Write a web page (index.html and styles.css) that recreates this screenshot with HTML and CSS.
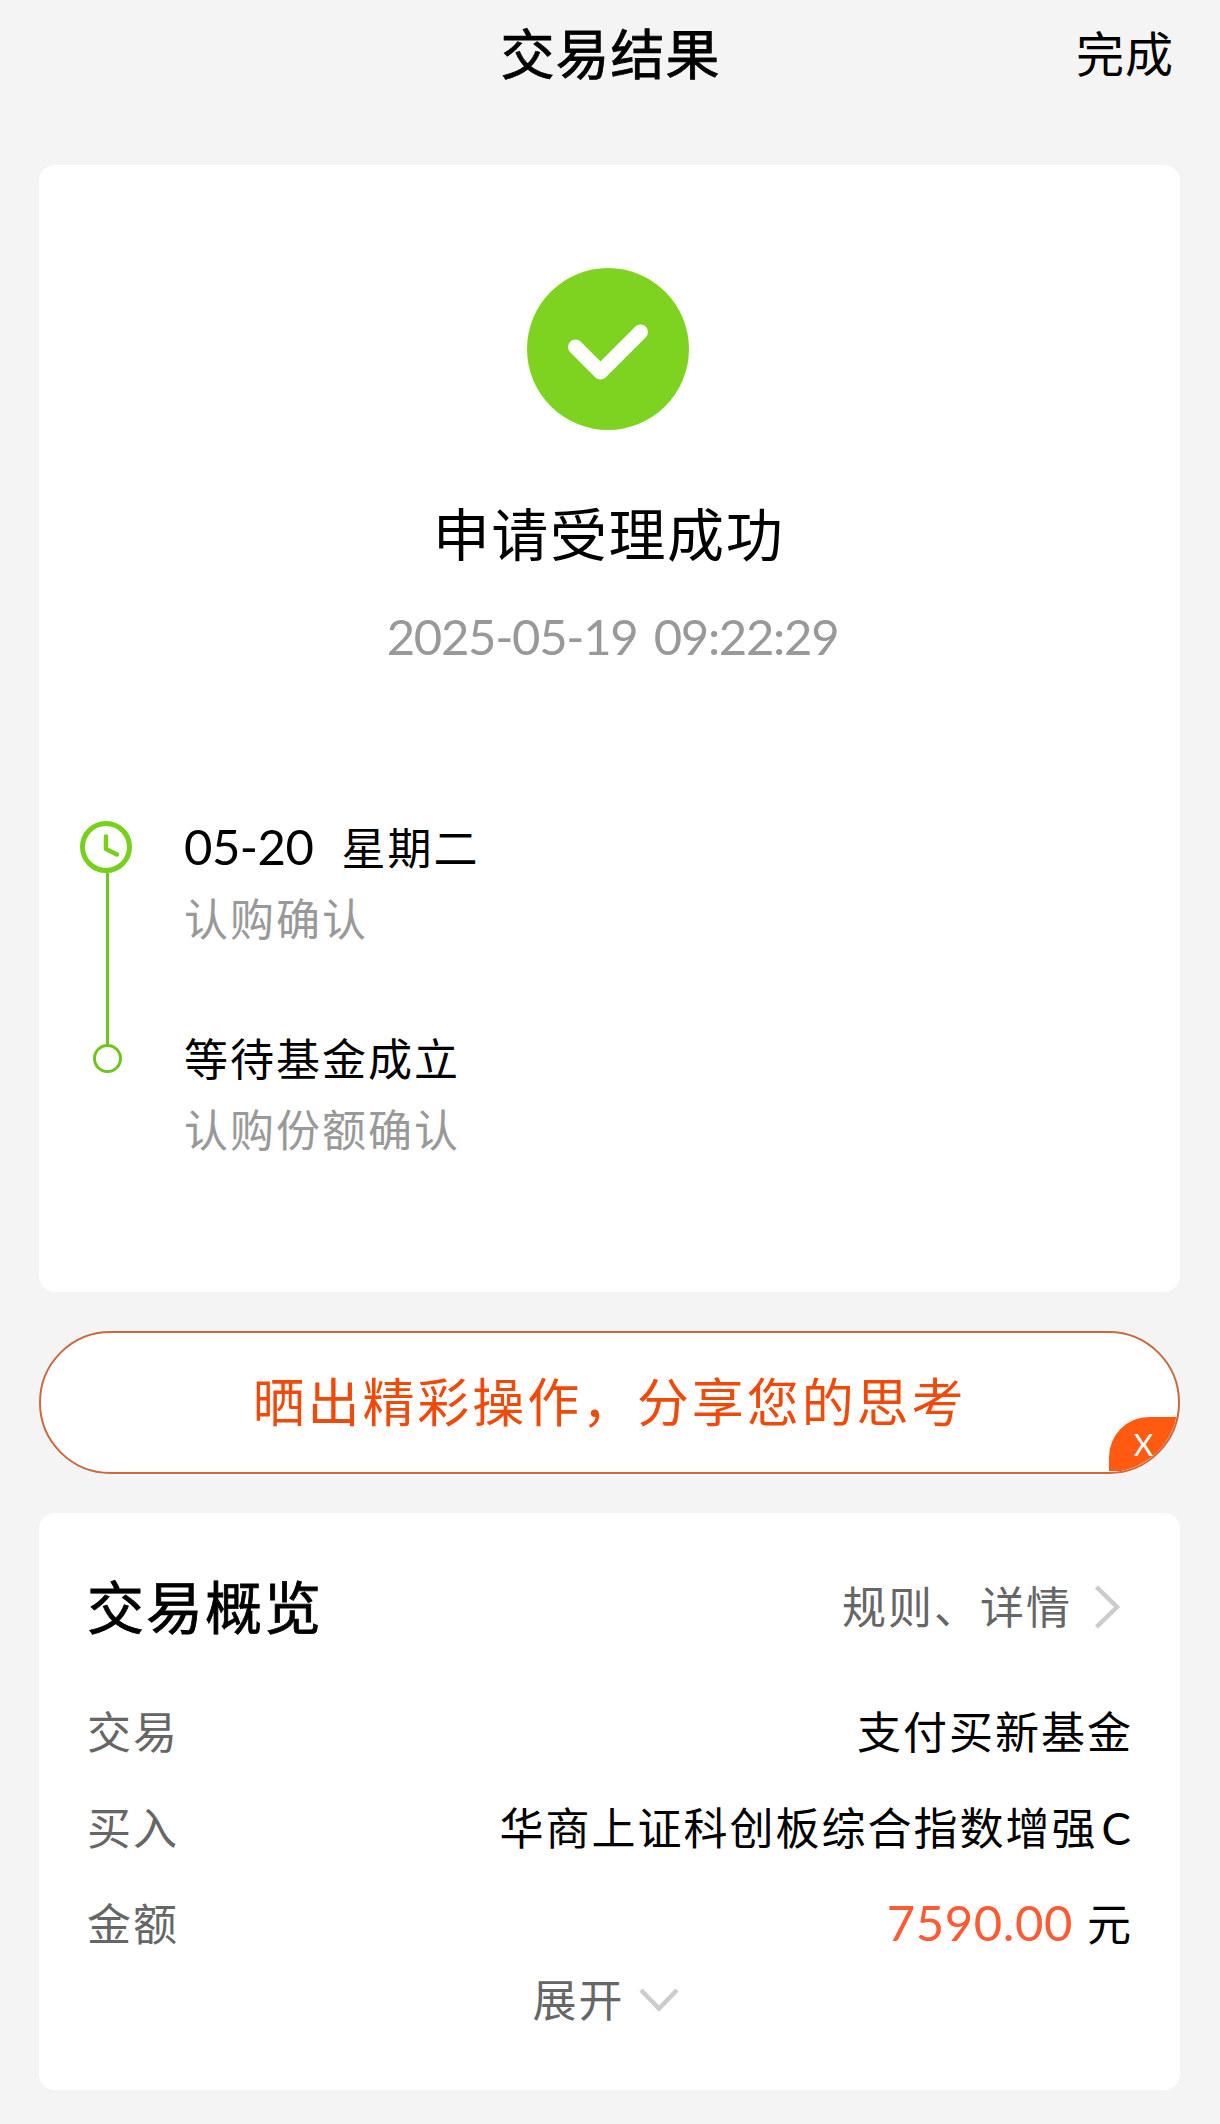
FILE: index.html
```
<!DOCTYPE html>
<html lang="zh-CN">
<head>
  <meta charset="UTF-8">
  <title>交易结果</title>
  <link rel="stylesheet" href="styles.css">
</head>
<body>
  <header>
    <h1>交易结果</h1>
    <a class="done">完成</a>
  </header>

  <section class="card result">
    <svg class="success" viewBox="0 0 162 162">
      <circle cx="81" cy="81" r="81" fill="#7ed321"/>
      <path d="M48.500 79 L73.500 104 L113.500 64" fill="none" stroke="#fff" stroke-width="15" stroke-linecap="round" stroke-linejoin="round"/>
    </svg>
    <h2>申请受理成功</h2>
    <p class="time">2025-05-19 09:22:29</p>

    <div class="timeline">
      <div class="track">
        <svg class="clock" viewBox="0 0 52 52">
          <circle cx="26" cy="26" r="23.500" fill="none" stroke="#76d01c" stroke-width="5"/>
          <path d="M26 15.500 V28 L37 33.500" fill="none" stroke="#76d01c" stroke-width="4.500" stroke-linecap="round" stroke-linejoin="round"/>
        </svg>
        <div class="line"></div>
        <div class="dot"></div>
      </div>
      <div class="steps">
        <div class="step">
          <p class="step-title"><span class="date">05-20</span>星期二</p>
          <p class="step-desc">认购确认</p>
        </div>
        <div class="step">
          <p class="step-title">等待基金成立</p>
          <p class="step-desc">认购份额确认</p>
        </div>
      </div>
    </div>
  </section>

  <div class="share">
    <span>晒出精彩操作，分享您的思考</span>
    <div class="close">X</div>
  </div>

  <section class="card overview">
    <div class="overview-head">
      <h3>交易概览</h3>
      <a class="rules">规则、详情
        <svg class="arrow-right" viewBox="0 0 26 44"><path d="M2.500 2 L23 22 L2.500 42" fill="none" stroke="#ccc" stroke-width="4.500"/></svg>
      </a>
    </div>
    <div class="row"><span class="label">交易</span><span class="value">支付买新基金</span></div>
    <div class="row"><span class="label">买入</span><span class="value">华商上证科创板综合指数增强<span class="share-class">C</span></span></div>
    <div class="row"><span class="label">金额</span><span class="value"><span class="amount">7590.00</span>元</span></div>
    <div class="expand">展开
      <svg class="arrow-down" viewBox="0 0 40 24"><path d="M2 2 L20 20.500 L38 2" fill="none" stroke="#ccc" stroke-width="4.500"/></svg>
    </div>
  </section>
</body>
</html>
```
FILE: styles.css
```
* {
  box-sizing: border-box;
}
body, h1, h2, h3, p {
  margin: 0;
  font-weight: 400;
}
body {
  background: #f4f4f4;
  color: #000;
  font-family: Lato, 'Noto Sans CJK SC', sans-serif;
  font-size: 44px;
  line-height: 54px;
  letter-spacing: 2px;
  padding: 0 40px 0 39px;
}
header {
  display: grid;
  grid-template-columns: 1fr auto 1fr;
  align-items: center;
  height: 107px;
  margin-bottom: 58px;
}
h1 {
  grid-column: 2;
  font-size: 54px;
  letter-spacing: 1px;
  padding: 2px 0 0 2px;
  -webkit-text-stroke: 0.8px #000;
}
.done {
  justify-self: end;
  font-size: 48px;
  letter-spacing: 1px;
  margin-right: 6px;
}
.card {
  background: #fff;
  border-radius: 16px;
}
.result {
  height: 1127px;
  padding-top: 103px;
  text-align: center;
}
.success {
  display: block;
  width: 162px;
  height: 162px;
  margin: 0 auto 74px 488px;
}
h2 {
  font-size: 57px;
  line-height: 60px;
  letter-spacing: 1.6px;
  padding-right: 2px;
}
.time {
  margin-top: 42px;
  padding-left: 6px;
  font-size: 49px;
  line-height: 60px;
  letter-spacing: -1.3px;
  word-spacing: 5px;
  color: #999;
}
.timeline {
  display: flex;
  margin-top: 155px;
  padding-left: 41px;
  text-align: left;
}
.track {
  display: flex;
  flex-direction: column;
  align-items: center;
  width: 54px;
}
.clock {
  width: 52px;
  height: 52px;
  margin-right: 2px;
}
.line {
  width: 3px;
  height: 171px;
  background: #6fc51f;
}
.dot {
  width: 29px;
  height: 29px;
  border: 3px solid #6fc51f;
  border-radius: 50%;
}
.steps {
  margin-left: 50px;
}
.step {
  height: 211px;
}
.step-title {
  height: 54px;
}
.date {
  font-size: 49px;
  line-height: 1;
  letter-spacing: -0.5px;
  margin-right: 28px;
}
.step-desc {
  margin-top: 17px;
  color: #999;
}
.share {
  position: relative;
  height: 143px;
  margin: 39px 0;
  border: 2px solid #c96a3c;
  border-radius: 72px;
  background: #fff;
  overflow: hidden;
  color: #f04a0a;
  font-size: 52px;
  line-height: 138px;
  letter-spacing: 2.9px;
  text-align: center;
}
.close {
  position: absolute;
  right: 0;
  bottom: 1px;
  width: 69px;
  height: 54px;
  background: #ff5a12;
  border-top-left-radius: 40px;
  color: #fff;
  font-size: 30px;
  line-height: 54px;
  letter-spacing: 0;
}
.overview {
  height: 577px;
  padding: 60px 47px 0 48px;
}
.overview-head {
  display: flex;
  justify-content: space-between;
  align-items: center;
  height: 68px;
  margin-bottom: 64px;
}
h3 {
  font-size: 57px;
  -webkit-text-stroke: 0.8px #000;
}
.rules, .expand {
  display: flex;
  align-items: center;
  color: #666;
}
.arrow-right {
  width: 26px;
  height: 44px;
  margin: 0 13px 0 22px;
}
.row {
  display: flex;
  justify-content: space-between;
  height: 54px;
  margin-bottom: 42px;
}
.label {
  color: #666;
}
.share-class {
  margin-left: 4px;
}
.amount {
  color: #ff5a33;
  font-size: 49px;
  line-height: 1;
  letter-spacing: 0.6px;
  margin-right: 14px;
}
.expand {
  justify-content: center;
  margin-top: -20px;
  padding-right: 9px;
}
.arrow-down {
  width: 40px;
  height: 24px;
  margin-left: 14px;
}
```
